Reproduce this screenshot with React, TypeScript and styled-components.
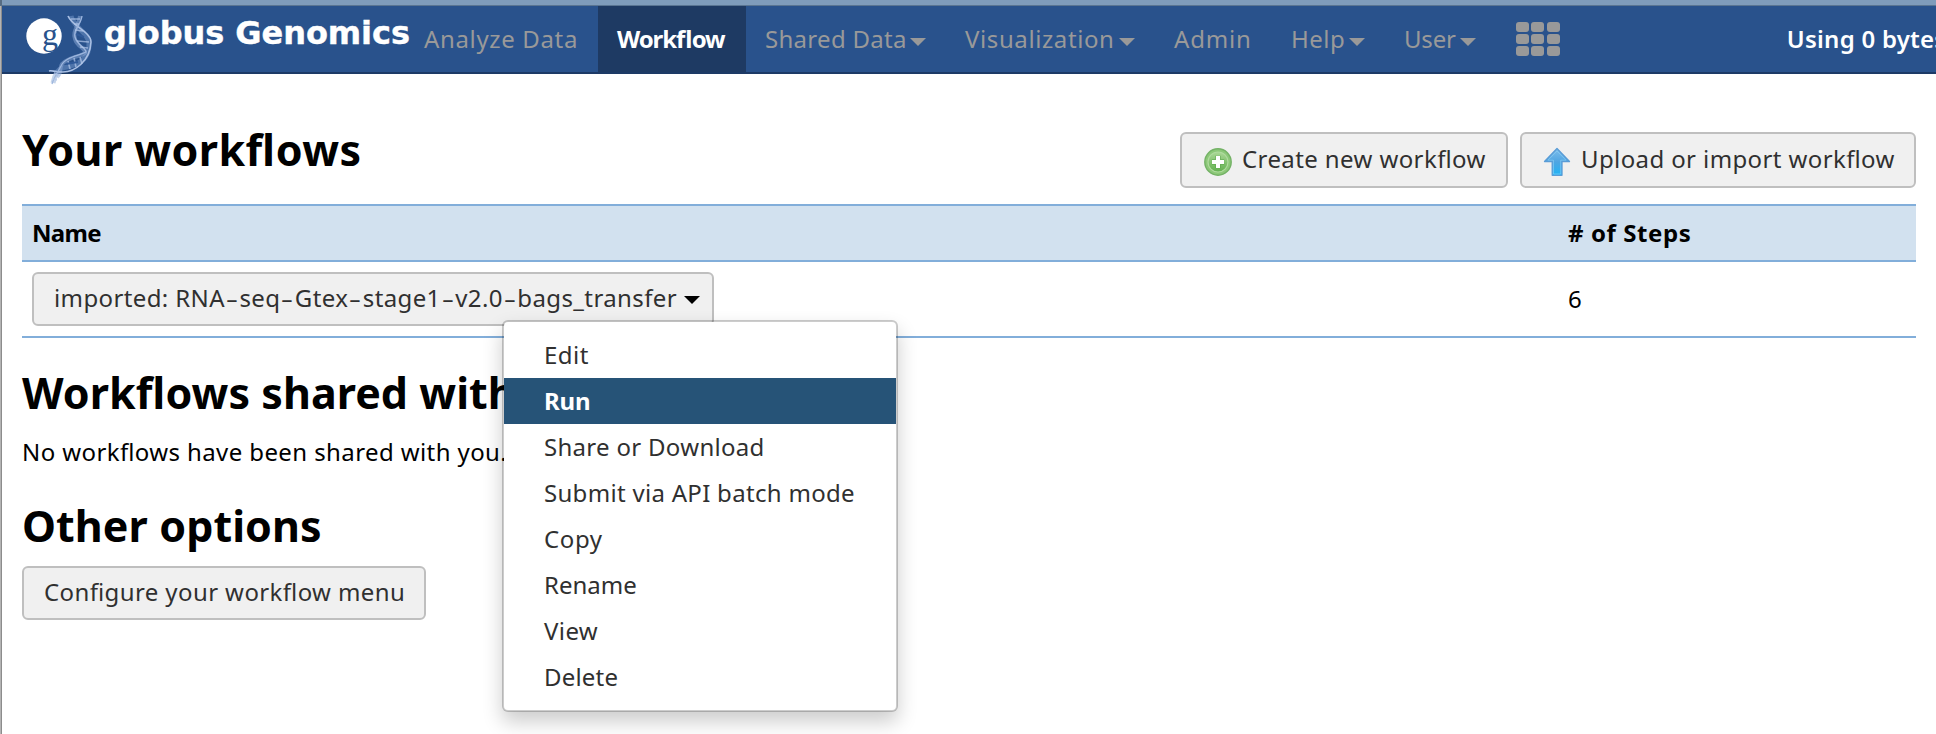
import React from "react";
import styled, { createGlobalStyle } from "styled-components";

const GlobalStyle = createGlobalStyle`
  * { box-sizing: border-box; }
  html, body { margin: 0; background: #fff; overflow: hidden; }
  body {
    font-family: "Noto Sans", "Open Sans", sans-serif;
    font-size: 24px;
    line-height: 32px;
    font-feature-settings: "liga" 1;
    color: #000;
  }
`;

const Screen = styled.div`
  display: flex;
  flex-direction: column;
  width: 1936px;
  height: 734px;
  overflow: hidden;
`;

const WindowStrip = styled.div`
  flex: none;
  height: 6px;
  background: #7f9cbb;
  border-bottom: 1px solid #5a7592;
  border-left: 2px solid #566c83;
`;

const Frame = styled.div`
  flex: 1;
  display: flex;
  flex-direction: column;
  padding-left: 2px;
  background: linear-gradient(to right, #b4b4b4 1px, #8c8c8c 1px, #8c8c8c 2px, #fff 2px);
`;

const Masthead = styled.header`
  flex: none;
  display: flex;
  height: 68px;
  background: #29528c;
  border-bottom: 2px solid #1d3a66;
`;

const Brand = styled.a`
  flex: none;
  display: flex;
  width: 403px;
  padding-left: 22px;
  color: #fff;
  white-space: nowrap;
`;

const Logo = styled.svg`
  flex: none;
  width: 80px;
  height: 84px;
`;

const BrandName = styled.span`
  height: 54px;
  font: bold 32px/54px "DejaVu Sans", sans-serif;
  letter-spacing: -0.06px;
  -webkit-text-stroke: 0.4px #fff;
`;

const Nav = styled.nav`
  flex: 1;
  display: flex;
`;

const NavItem = styled.a<{ $width: number; $spacing: number; $active?: boolean }>`
  flex: none;
  display: flex;
  align-items: center;
  justify-content: space-between;
  width: ${(p) => p.$width}px;
  padding: 0 20px 0 19px;
  white-space: nowrap;
  letter-spacing: ${(p) => p.$spacing}px;
  color: ${(p) => (p.$active ? "#fff" : "#999")};
  background: ${(p) => (p.$active ? "#1e3a63" : "transparent")};
  font-weight: ${(p) => (p.$active ? 700 : 400)};
`;

const Caret = styled.i<{ $color: string }>`
  flex: none;
  border: 8px solid transparent;
  border-top-color: ${(p) => p.$color};
  border-bottom: 0;
`;

const NavCaret = styled(Caret)`
  margin-top: 6px;
`;

const AppGrid = styled.div`
  align-self: center;
  display: grid;
  grid-template-columns: repeat(3, 13px);
  grid-auto-rows: 9.6px;
  gap: 2.6px 2.4px;
  margin-left: 20px;
`;

const AppCell = styled.i`
  border-radius: 3px;
  background: #999;
`;

const Quota = styled.div`
  align-self: center;
  margin-left: 227px;
  white-space: nowrap;
  font-weight: 600;
  letter-spacing: 0.25px;
  color: #fff;
`;

const Content = styled.main`
  display: flex;
  flex-direction: column;
  align-items: flex-start;
  width: 1914px;
  padding: 58px 0 0 20px;
`;

const Heading = styled.h2<{ $spacing?: number }>`
  margin: 0;
  font-size: 43px;
  line-height: 56px;
  font-weight: 700;
  white-space: nowrap;
  letter-spacing: ${(p) => p.$spacing ?? 0}px;
`;

const TitleBar = styled.div`
  display: flex;
  justify-content: space-between;
  align-items: flex-start;
  width: 100%;
  height: 72px;
`;

const TitleHeading = styled(Heading)`
  margin-top: -10px;
`;

const Actions = styled.div`
  display: flex;
  gap: 12px;
`;

const Button = styled.button<{ $width: number; $spacing?: number }>`
  flex: none;
  display: flex;
  align-items: center;
  width: ${(p) => p.$width}px;
  height: 54px;
  padding: 0 0 2px 20px;
  border: 2px solid #bfbfbf;
  border-radius: 6px;
  background: #f0f0f0;
  color: #303030;
  font: inherit;
  font-feature-settings: inherit;
  white-space: nowrap;
  letter-spacing: ${(p) => p.$spacing ?? 0.38}px;
`;

const ActionButton = styled(Button)`
  height: 56px;
  padding-bottom: 3px;
`;

const ButtonIcon = styled.svg<{ $gap: number }>`
  flex: none;
  width: 32px;
  height: 32px;
  margin: 7px ${(p) => p.$gap}px 0 0;
`;

const Table = styled.div`
  width: 100%;
  border-top: 2px solid #82aeda;
`;

const Row = styled.div<{ $height: number; $head?: boolean }>`
  display: grid;
  grid-template-columns: 1536px 1fr;
  align-items: center;
  height: ${(p) => p.$height}px;
  padding-left: 10px;
  border-bottom: 2px solid #82aeda;
  background: ${(p) => (p.$head ? "#d2e1ef" : "transparent")};
  font-weight: ${(p) => (p.$head ? 700 : 400)};
`;

const HeadCell = styled.span<{ $spacing: number }>`
  letter-spacing: ${(p) => p.$spacing}px;
`;

const Dash = styled.span`
  display: inline-block;
  width: 14.5px;
  text-align: center;
  transform: scaleX(1.6);
`;

const RowCaret = styled(Caret)`
  margin: 3px 0 0 7px;
`;

const MenuAnchor = styled.div`
  position: relative;
  display: flex;
`;

const Menu = styled.ul`
  position: absolute;
  z-index: 10;
  top: 48px;
  left: 470px;
  width: 396px;
  margin: 0;
  padding: 10px 0;
  list-style: none;
  border: 2px solid rgba(0, 0, 0, 0.2);
  border-radius: 6px;
  background: #fff;
  background-clip: padding-box;
  box-shadow: 0 10px 20px rgba(0, 0, 0, 0.2);
`;

const MenuItem = styled.li<{ $spacing: number; $selected?: boolean }>`
  height: 46px;
  padding-left: 40px;
  line-height: 45px;
  white-space: nowrap;
  letter-spacing: ${(p) => p.$spacing}px;
  color: ${(p) => (p.$selected ? "#fff" : "#303030")};
  background: ${(p) => (p.$selected ? "#265377" : "transparent")};
  font-weight: ${(p) => (p.$selected ? 700 : 400)};
`;

const SharedHeading = styled(Heading)`
  margin-top: 27px;
`;

const Note = styled.p`
  margin: 15px 0 0;
  letter-spacing: 0.4px;
`;

const OptionsHeading = styled(Heading)`
  margin: 30px 0 12px;
`;

const navItems = [
  { label: "Analyze Data", width: 193, spacing: 0.65 },
  { label: "Workflow", width: 148, spacing: -1.06, active: true },
  { label: "Shared Data", width: 200, spacing: 0.3, caret: true },
  { label: "Visualization", width: 209, spacing: 0.6, caret: true },
  { label: "Admin", width: 117, spacing: 0.8 },
  { label: "Help", width: 113, spacing: 0.5, caret: true },
  { label: "User", width: 111, spacing: -0.2, caret: true },
];

const menuItems = [
  { label: "Edit", spacing: 0.5 },
  { label: "Run", spacing: -0.18, selected: true },
  { label: "Share or Download", spacing: 0.3 },
  { label: "Submit via API batch mode", spacing: 0.3 },
  { label: "Copy", spacing: 0.6 },
  { label: "Rename", spacing: 0 },
  { label: "View", spacing: 0.4 },
  { label: "Delete", spacing: 0.2 },
];

const workflowName = "imported: RNA-seq-Gtex-stage1-v2.0-bags_transfer";

function GlobusLogo() {
  return (
    <Logo viewBox="24 6 80 84">
      <circle cx="44" cy="36" r="17.7" fill="#fff" />
      <text x="42" y="45" fontFamily="Liberation Serif, serif" fontSize="32" fill="#29528c">g</text>
      <g fill="none" strokeLinecap="butt">
        <path d="M71 16C73 27 88 32 89 43C90 60 76 66 62 68C57 70 55 75 53 83" stroke="#7f9fd0" strokeWidth="5" opacity=".45" />
        <path d="M80 16C79 26 72 31 75 39C77 47 86 48 85 53C80 57 68 57 62 64C59 68 62 73 57 77" stroke="#8fabd8" strokeWidth="4" opacity=".5" />
        <path d="M68 16C72 26 91 32 91 42C90 62 74 72 63 72C54 72 52 70 49 71" stroke="#a9bfe3" strokeWidth="1.6" />
        <path d="M82 16C81 25 73 29 75 37C77 45 86 48 86 52C78 56 65 57 61 66C58 72 54 77 52 84" stroke="#9db6de" strokeWidth="1.3" />
        <path d="M71 19h9M74 24h5M75 30l8 1M77 41l12 1M80 47l8 1M80 57l2 7M74 58l2 9M68 61l2 8M54 73l6 3M53 79l4 1" stroke="#b4c8ea" strokeWidth="1.6" opacity=".7" />
        <path d="M76 34l8 3M66 64l12-2" stroke="#305a99" strokeWidth="2" />
      </g>
    </Logo>
  );
}

function AddIcon() {
  return (
    <ButtonIcon viewBox="0 0 32 32" $gap={8}>
      <defs>
        <linearGradient id="addFill" x1="0" y1="0" x2="0" y2="1">
          <stop offset="0" stopColor="#a9d795" />
          <stop offset="1" stopColor="#62b04f" />
        </linearGradient>
      </defs>
      <circle cx="16" cy="16" r="13.2" fill="#8cc878" stroke="#74b266" strokeWidth="1.4" />
      <circle cx="16" cy="16" r="10" fill="url(#addFill)" stroke="#b0da9f" strokeWidth="1.2" />
      <path d="M16 9.8v12.4M9.8 16h12.4" stroke="#4c9c3d" strokeWidth="6" opacity=".4" />
      <path d="M16 10v12M10 16h12" stroke="#fff" strokeWidth="4" />
    </ButtonIcon>
  );
}

function UploadIcon() {
  return (
    <ButtonIcon viewBox="0 0 32 32" $gap={7}>
      <defs>
        <linearGradient id="upFill" x1="0" y1="0" x2="0" y2="1">
          <stop offset="0" stopColor="#7fbdea" />
          <stop offset=".5" stopColor="#4fa5e2" />
          <stop offset="1" stopColor="#1fb4f6" />
        </linearGradient>
      </defs>
      <path d="M15 2.5L27.5 15.5H20V29.3H10.2V15.5H2.5Z" fill="url(#upFill)" stroke="#5a9cd6" strokeWidth="1.3" strokeLinejoin="round" />
      <path d="M15 5L24 14.2H18.7V28H11.5V14.2H6Z" fill="none" stroke="#8fd0f5" strokeWidth="1" opacity=".6" />
    </ButtonIcon>
  );
}

export default function App() {
  return (
    <Screen>
      <GlobalStyle />
      <WindowStrip />
      <Frame>
        <Masthead>
          <Brand>
            <GlobusLogo />
            <BrandName>globus Genomics</BrandName>
          </Brand>
          <Nav>
            {navItems.map((item) => (
              <NavItem key={item.label} $width={item.width} $spacing={item.spacing} $active={item.active}>
                {item.label}
                {item.caret && <NavCaret $color="#999" />}
              </NavItem>
            ))}
            <AppGrid>
              {Array.from({ length: 9 }, (_, i) => (
                <AppCell key={i} />
              ))}
            </AppGrid>
            <Quota>Using 0 bytes</Quota>
          </Nav>
        </Masthead>

        <Content>
          <TitleBar>
            <TitleHeading $spacing={0.45}>Your workflows</TitleHeading>
            <Actions>
              <ActionButton $width={328} $spacing={0.4}>
                <AddIcon />
                Create new workflow
              </ActionButton>
              <ActionButton $width={396} $spacing={0.39}>
                <UploadIcon />
                Upload or import workflow
              </ActionButton>
            </Actions>
          </TitleBar>

          <Table>
            <Row $height={56} $head>
              <HeadCell $spacing={-0.7}>Name</HeadCell>
              <HeadCell $spacing={0.6}>{"# of Steps"}</HeadCell>
            </Row>
            <Row $height={76}>
              <MenuAnchor>
                <Button $width={682}>
                  <span>
                    {workflowName.split("-").map((part, i) => (
                      <React.Fragment key={part}>
                        {i > 0 && <Dash>-</Dash>}
                        {part}
                      </React.Fragment>
                    ))}
                  </span>
                  <RowCaret $color="#000" />
                </Button>
                <Menu>
                  {menuItems.map((item) => (
                    <MenuItem key={item.label} $spacing={item.spacing} $selected={item.selected}>
                      {item.label}
                    </MenuItem>
                  ))}
                </Menu>
              </MenuAnchor>
              <span>6</span>
            </Row>
          </Table>

          <SharedHeading $spacing={0.05}>Workflows shared with you</SharedHeading>
          <Note>No workflows have been shared with you.</Note>
          <OptionsHeading $spacing={0.08}>Other options</OptionsHeading>
          <Button $width={404} $spacing={0.4}>
            Configure your workflow menu
          </Button>
        </Content>
      </Frame>
    </Screen>
  );
}
